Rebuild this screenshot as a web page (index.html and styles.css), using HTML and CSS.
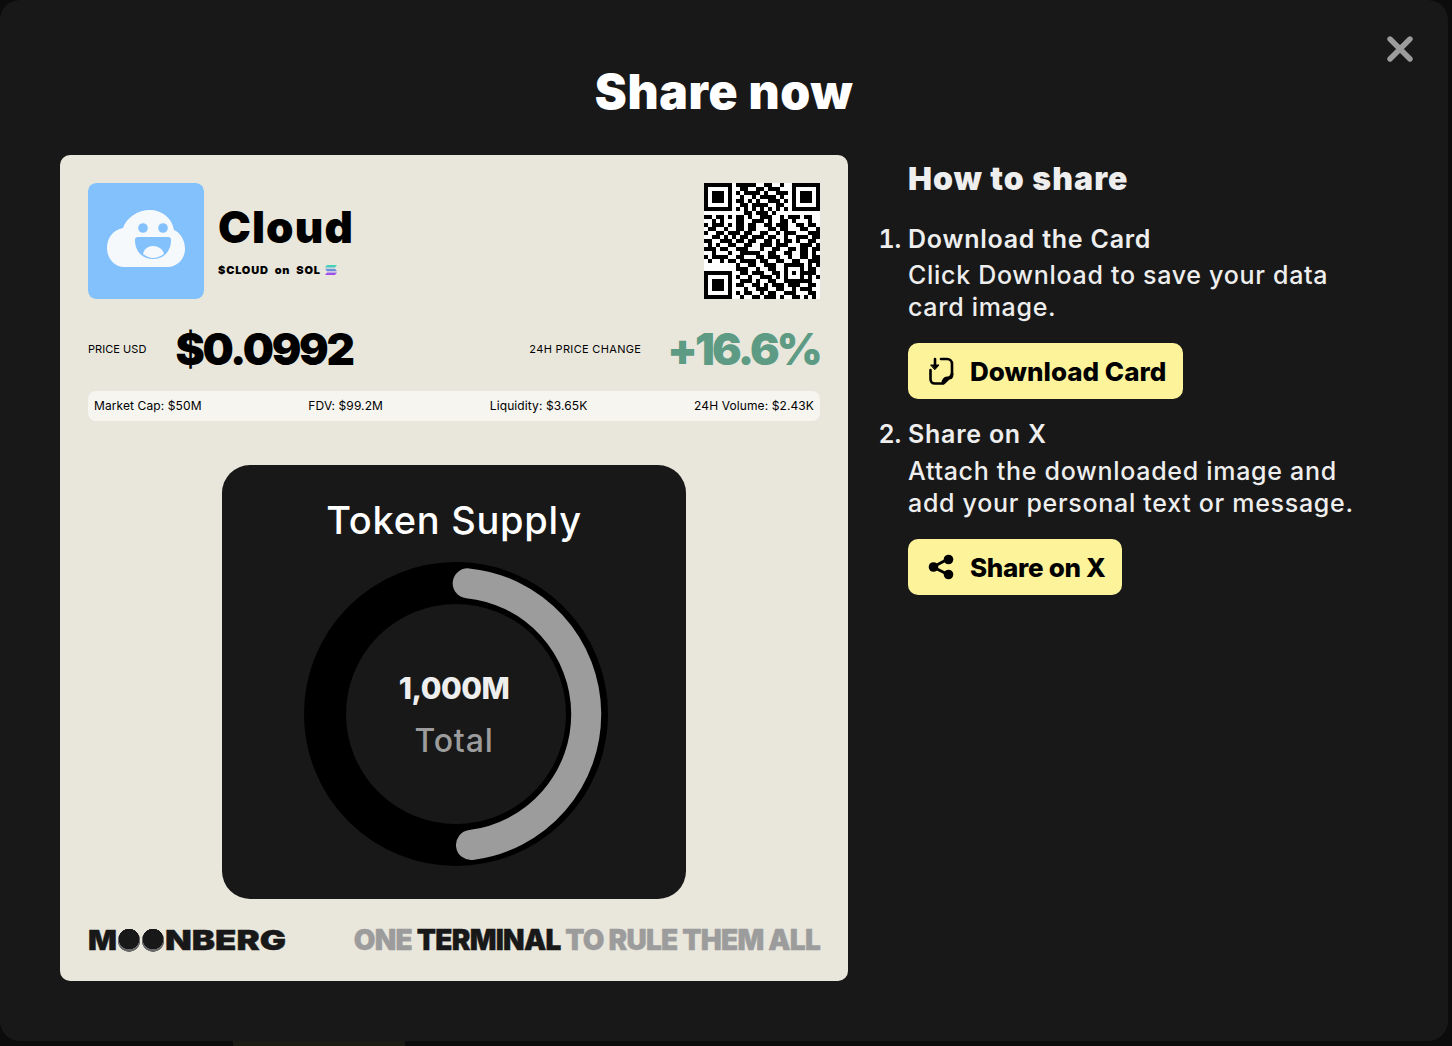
FILE: index.html
```html
<!DOCTYPE html>
<html lang="en">
<head>
<meta charset="utf-8">
<title>Share now</title>
<link rel="stylesheet" href="styles.css">
</head>
<body>
<main class="modal">
  <button class="close" aria-label="Close">
    <svg width="28" height="28" viewBox="0 0 28 28"><path d="M4 4l20 20M24 4L4 24" fill="none" stroke="#9c9c9c" stroke-width="5.4" stroke-linecap="round"/></svg>
  </button>
  <h1 class="title">Share now</h1>
  <div class="content">
    <section class="card">
      <header class="head">
        <svg class="logo" width="116" height="116" viewBox="0 0 116 116">
          <rect width="116" height="116" rx="8" fill="#82c1fb"/>
          <path d="M36 84C26 84 19 75 19 65C19 55 25 47 35 45C39 34 50 27 62 27C74 27 84 35 86 47C93 50 97 58 97 66C97 76 89 84 80 84Z" fill="#f6f9fc"/>
          <circle cx="55" cy="45" r="4.8" fill="#82c1fb"/>
          <circle cx="75" cy="45" r="4.8" fill="#82c1fb"/>
          <path d="M50 54H80C82 54 83 55 83 57C83 69 75 76 65 76C55 76 47 69 47 57C47 55 48 54 50 54Z" fill="#82c1fb"/>
          <path d="M55 71C56 66 60 63 65 63C70 63 75 66 76 71C73 73 69 75 65 75C61 75 58 73 55 71Z" fill="#f6f9fc"/>
        </svg>
        <div class="token">
          <h2 class="name">Cloud</h2>
          <p class="ticker">$CLOUD&nbsp; on&nbsp; SOL
            <svg class="sol" width="12" height="10" viewBox="0 0 12 10">
              <defs><linearGradient id="solg" x1="0" y1="0" x2="0" y2="1"><stop offset="0" stop-color="#3fe0b0"/><stop offset="0.5" stop-color="#6a8fe0"/><stop offset="1" stop-color="#b03ff0"/></linearGradient></defs>
              <path d="M2 0h10L10 2.600H0zM0 3.700h10l2 2.600H2zM2 7.400h10L10 10H0z" fill="url(#solg)"/>
            </svg>
          </p>
        </div>
        <svg class="qr" width="116" height="116" viewBox="0 0 29 29" shape-rendering="crispEdges">
          <rect width="29" height="29" fill="#fff"/>
          <path fill="#000" fill-rule="evenodd" d="M0 0h7v7H0zM1 1v5h5V1zM2 2h3v3H2zM22 0h7v7h-7zM23 1v5h5V1zM24 2h3v3h-3zM0 22h7v7H0zM1 23v5h5v-5zM2 24h3v3H2zM20 20h5v5h-5zM21 21v3h3v-3zM22 22h1v1h-1z"/>
          <path stroke="#000" stroke-width="1" fill="none" d="M8 .5h5M15 .5h2M19 .5h1M9 1.5h2M13 1.5h2M16 1.5h3M8 2.5h1M10 2.5h4M15 2.5h1M18 2.5h3M9 3.5h1M12 3.5h1M14 3.5h4M19 3.5h1M8 4.5h2M11 4.5h1M13 4.5h1M16 4.5h3M20 4.5h1M9 5.5h2M12 5.5h4M18 5.5h2M8 6.5h1M10 6.5h1M12 6.5h1M14 6.5h1M16 6.5h1M18 6.5h1M20 6.5h1M10 7.5h2M13 7.5h3M17 7.5h1M0 8.5h2M3 8.5h2M6 8.5h1M8 8.5h2M11 8.5h1M14 8.5h3M19 8.5h1M21 8.5h3M25 8.5h2M2 9.5h1M4 9.5h1M8 9.5h2M12 9.5h3M16 9.5h1M19 9.5h2M22 9.5h1M26 9.5h1M0 10.5h1M2 10.5h3M6 10.5h1M8 10.5h2M11 10.5h2M15 10.5h2M18 10.5h3M23 10.5h2M26 10.5h2M1 11.5h2M5 11.5h1M8 11.5h2M11 11.5h2M16 11.5h2M19 11.5h2M24 11.5h2M28 11.5h1M0 12.5h1M3 12.5h2M6 12.5h3M10 12.5h2M14 12.5h2M18 12.5h1M20 12.5h3M26 12.5h3M2 13.5h2M5 13.5h1M7 13.5h1M9 13.5h2M12 13.5h3M16 13.5h2M20 13.5h1M23 13.5h3M27 13.5h2M0 14.5h2M4 14.5h3M8 14.5h2M11 14.5h2M15 14.5h2M18 14.5h1M20 14.5h2M23 14.5h1M26 14.5h2M1 15.5h1M3 15.5h1M6 15.5h2M10 15.5h2M14 15.5h3M18 15.5h3M24 15.5h3M28 15.5h1M0 16.5h3M4 16.5h2M8 16.5h3M14 16.5h1M17 16.5h2M21 16.5h2M24 16.5h2M27 16.5h2M2 17.5h1M6 17.5h1M9 17.5h5M16 17.5h2M20 17.5h2M24 17.5h2M27 17.5h1M0 18.5h1M2 18.5h4M8 18.5h2M13 18.5h2M16 18.5h3M21 18.5h1M24 18.5h2M27 18.5h2M1 19.5h1M4 19.5h1M6 19.5h2M9 19.5h4M14 19.5h2M18 19.5h2M22 19.5h2M26 19.5h3M8 20.5h1M11 20.5h2M15 20.5h3M26 20.5h1M28 20.5h1M8 21.5h3M13 21.5h1M16 21.5h2M26 21.5h2M9 22.5h2M12 22.5h3M17 22.5h2M25 22.5h3M8 23.5h1M11 23.5h1M14 23.5h3M18 23.5h1M26 23.5h1M28 23.5h1M9 24.5h3M13 24.5h1M16 24.5h2M25 24.5h2M8 25.5h2M12 25.5h2M15 25.5h1M17 25.5h3M21 25.5h3M26 25.5h2M10 26.5h1M13 26.5h3M18 26.5h2M22 26.5h1M24 26.5h3M8 27.5h1M10 27.5h2M14 27.5h1M16 27.5h2M20 27.5h3M26 27.5h2M9 28.5h1M12 28.5h2M15 28.5h3M19 28.5h1M22 28.5h2M25 28.5h1M27 28.5h1"/>
        </svg>
      </header>

      <div class="prices">
        <span class="label">PRICE USD</span>
        <strong class="price">$0.0992</strong>
        <span class="label change-label">24H PRICE CHANGE</span>
        <strong class="change">+16.6%</strong>
      </div>

      <ul class="stats">
        <li>Market Cap: $50M</li>
        <li>FDV: $99.2M</li>
        <li>Liquidity: $3.65K</li>
        <li>24H Volume: $2.43K</li>
      </ul>

      <section class="chart">
        <h3 class="chart-title">Token Supply</h3>
        <div class="donut">
          <svg width="304" height="304" viewBox="0 0 304 304">
            <circle cx="152" cy="152" r="131" fill="none" stroke="#000" stroke-width="42"/>
            <path d="M163.7 21.3A131.7 131.7 0 0 1 167 283" fill="none" stroke="#9c9c9c" stroke-width="30" stroke-linecap="round"/>
          </svg>
          <div class="donut-label">
            <strong class="total">1,000M</strong>
            <span class="total-label">Total</span>
          </div>
        </div>
      </section>

      <footer class="foot">
        <span class="brand"><span class="wide wide-m">M</span><span class="moon">O</span><span class="moon">O</span><span class="wide wide-rest">NBERG</span></span>
        <span class="tagline">ONE <b>TERMINAL</b> TO RULE THEM ALL</span>
      </footer>
    </section>

    <aside class="howto">
      <h2 class="howto-title">How to share</h2>
      <ol class="steps">
        <li class="step">
          <span class="step-title">Download the Card</span>
          <p class="step-text">Click Download to save your data card image.</p>
          <a class="btn btn-download">
            <svg width="26" height="28" viewBox="0 0 26 28" fill="none" stroke="#000" stroke-width="2.6" stroke-linecap="round" stroke-linejoin="round">
              <path d="M13 2H19C22 2 24 4 24 7V17C24 18 23 19 22 20L17 25C16 26 15 26.500 14 26.500H7C4 26.500 2.500 25 2.500 22V13"/>
              <path d="M24 17C24 22 22 21 19 21C17 21 15 23 15 26" stroke-width="3"/>
              <path d="M7 2V10"/>
              <path d="M3 8H11L7 12.500Z" fill="#000" stroke-width="1"/>
            </svg>
            Download Card
          </a>
        </li>
        <li class="step">
          <span class="step-title">Share on X</span>
          <p class="step-text">Attach the downloaded image and add your personal text or message.</p>
          <a class="btn btn-share">
            <svg width="26" height="28" viewBox="0 0 26 28" fill="#000" stroke="#000">
              <path d="M5 14L20 6M5 14L20 21.500" stroke-width="3" fill="none"/>
              <circle cx="5.500" cy="14" r="4.800" stroke="none"/>
              <circle cx="20.500" cy="6.500" r="4.800" stroke="none"/>
              <circle cx="20.500" cy="21.500" r="4.800" stroke="none"/>
            </svg>
            Share on X
          </a>
        </li>
      </ol>
    </aside>
  </div>
</main>
</body>
</html>
```

FILE: styles.css
```css
* { box-sizing: border-box; }
html, body { margin: 0; height: 100%; }
body {
  width: 1452px;
  height: 1046px;
  overflow: hidden;
  font-family: "Inter", "Noto Sans", sans-serif;
  background:
    linear-gradient(#1c1c15, #1c1c15) 233px 1041px / 172px 5px no-repeat,
    #0c0c0c;
}
.modal {
  position: relative;
  width: 1448px;
  height: 1041px;
  padding: 64px 60px 0;
  background: #181818;
  border-radius: 20px;
}
.close {
  position: absolute;
  top: 35px;
  right: 34px;
  padding: 0;
  border: 0;
  background: none;
  line-height: 0;
}
.title {
  margin: 0 0 35px;
  height: 56px;
  font-size: 48px;
  line-height: 56px;
  font-weight: 900;
  letter-spacing: 0.65px;
  text-align: center;
  color: #fff;
}
.content { display: flex; gap: 60px; }

.card {
  flex: none;
  width: 788px;
  height: 826px;
  padding: 28px;
  background: #e9e7dc;
  border-radius: 10px;
  color: #000;
}
.head { display: flex; height: 116px; align-items: flex-start; }
.logo { flex: none; border-radius: 8px; }
.token { margin-left: 14px; padding-top: 18px; flex: 1; }
.name {
  margin: 0;
  font-size: 44px;
  line-height: 52px;
  font-weight: 900;
  letter-spacing: 1.1px;
}
.ticker {
  margin: 10px 0 0;
  display: flex;
  align-items: center;
  gap: 4px;
  font-size: 11px;
  line-height: 14px;
  font-weight: 900;
  letter-spacing: 0.8px;
}
.qr { flex: none; }

.prices {
  display: flex;
  align-items: center;
  height: 50px;
  margin-top: 25px;
}
.label { font-size: 11px; font-weight: 400; letter-spacing: 0.05px; }
.price {
  margin-left: 29px;
  font-size: 44px;
  font-weight: 900;
  letter-spacing: -2.3px;
}
.change-label { margin-left: auto; letter-spacing: 0.33px; }
.change {
  margin-left: 26px;
  font-size: 44px;
  font-weight: 900;
  letter-spacing: -2.8px;
  color: #5d9b84;
}
.stats {
  display: flex;
  justify-content: space-between;
  align-items: center;
  height: 30px;
  margin: 17px 0 0;
  padding: 0 6px 2px;
  list-style: none;
  background: #f6f5f0;
  border-radius: 8px;
  font-size: 12px;
  letter-spacing: 0.1px;
}

.chart {
  width: 464px;
  height: 434px;
  margin: 44px auto 0;
  padding-top: 31px;
  background: #181818;
  border-radius: 28px;
  color: #fff;
}
.chart-title {
  margin: 0;
  font-size: 38px;
  line-height: 48px;
  font-weight: 500;
  letter-spacing: 0.75px;
  text-align: center;
}
.donut {
  display: grid;
  width: 304px;
  height: 304px;
  margin: 18px 0 0 81.5px;
}
.donut > * { grid-area: 1 / 1; }
.donut-label {
  display: flex;
  flex-direction: column;
  align-items: center;
  padding: 104px 3px 0 0;
}
.total { font-size: 30px; line-height: 44px; font-weight: 800; letter-spacing: -0.5px; color: #eee; }
.total-label { margin-top: 9px; font-size: 32px; line-height: 44px; font-weight: 500; letter-spacing: 0.8px; color: #9c9c9c; }

.foot {
  display: flex;
  justify-content: space-between;
  align-items: center;
  height: 28px;
  margin-top: 26px;
  color: #181818;
}
.brand {
  display: flex;
  align-items: center;
  font-size: 27px;
  line-height: 28px;
  font-weight: 900;
}
.wide {
  display: block;
  margin-top: 3px;
  transform-origin: left center;
  -webkit-text-stroke: 0.4px #181818;
}
.wide-m { width: 29px; transform: scaleX(1.12); }
.wide-rest { width: 120px; transform: scaleX(1.29); }
.moon {
  display: block;
  width: 24px;
  height: 28px;
  text-align: center;
  color: transparent;
  background:
    radial-gradient(circle 10.5px at 12px 14px, #181818 96%, transparent 100%),
    radial-gradient(circle 11.5px at 12px 15.500px, #6a6a6a 96%, transparent 100%);
}
.tagline {
  padding-top: 1px;
  font-size: 28px;
  font-weight: 900;
  letter-spacing: -0.75px;
  color: #9c9c9c;
  -webkit-text-stroke: 0.4px #9c9c9c;
}
.tagline b { font-weight: 900; color: #181818; -webkit-text-stroke: 0.4px #181818; }

.howto { width: 460px; color: #eee; }
.howto-title { margin: 0 0 18px; font-size: 32px; line-height: 48px; font-weight: 900; letter-spacing: 1.05px; }
.steps { margin: 0; padding: 0; list-style-position: outside; }
.step { font-size: 25px; font-weight: 600; }
.step + .step { margin-top: 17px; }
.step-title { display: block; line-height: 36px; letter-spacing: 0.75px; }
.step-text { margin: 2px 0 20px; font-size: 25px; line-height: 32px; font-weight: 500; letter-spacing: 0.7px; }
.step + .step .step-text { margin-top: 3px; }
.btn {
  display: inline-flex;
  align-items: center;
  gap: 16px;
  height: 56px;
  background: #fdf39b;
  border-radius: 10px;
  color: #000;
  font-size: 26px;
  font-weight: 800;
}
.btn svg { flex: none; }
.btn-download { padding: 0 17px 0 20px; }
.btn-share { padding: 0 16px 0 20px; letter-spacing: -0.3px; }
```
